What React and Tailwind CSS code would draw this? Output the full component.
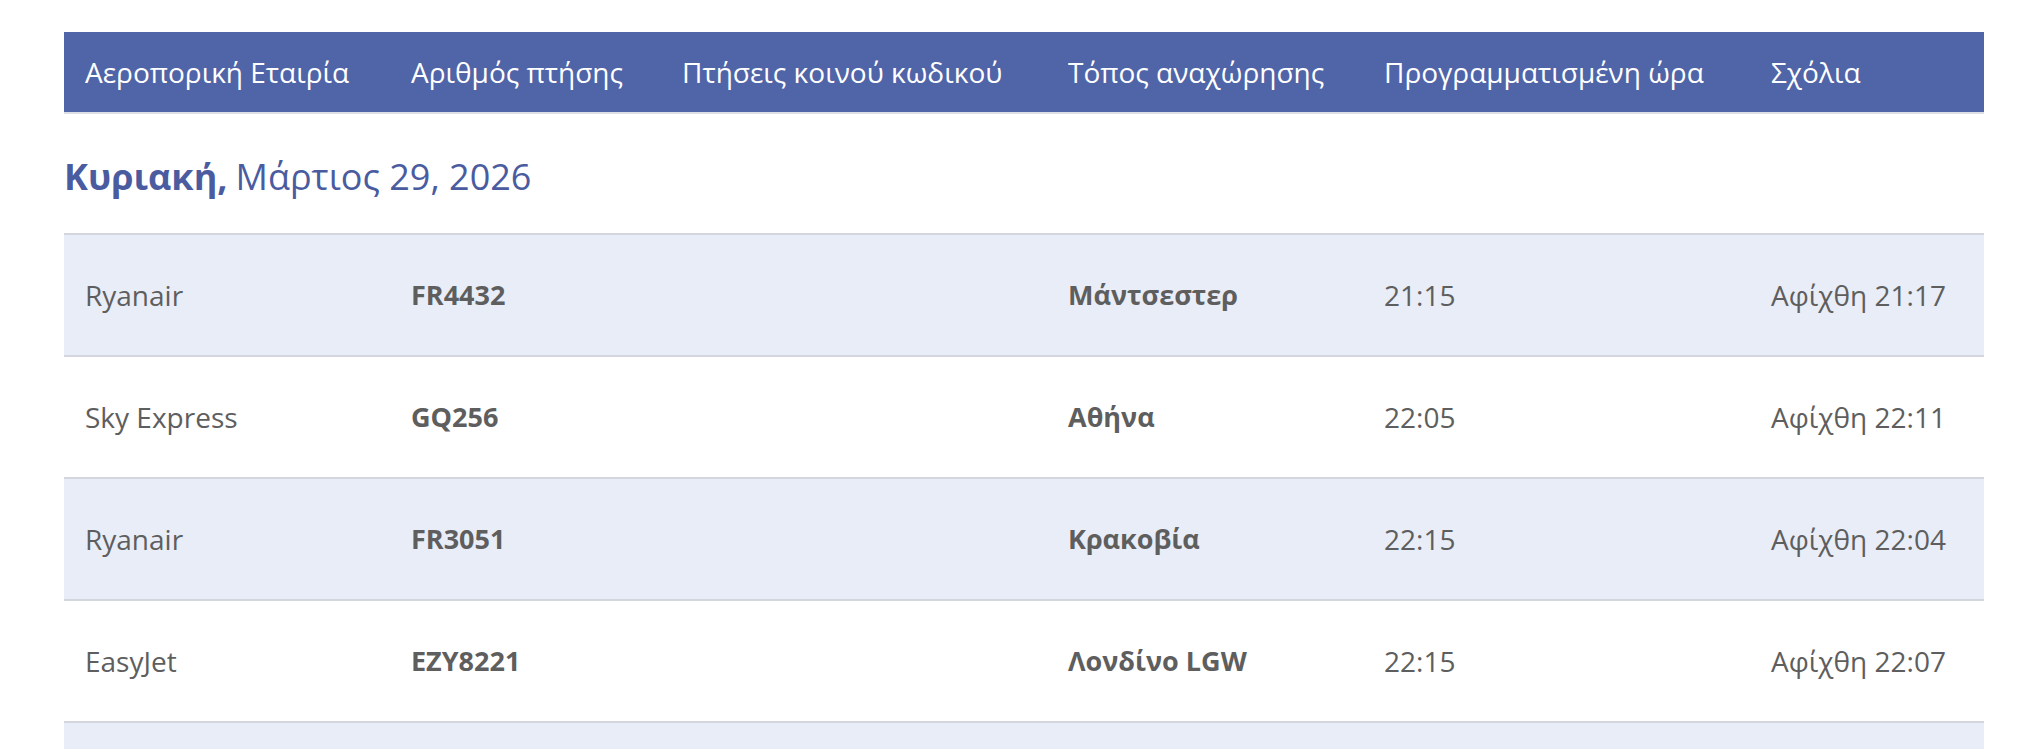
import React from "react";

const columns = [
    "Αεροπορική Εταιρία",
    "Αριθμός πτήσης",
    "Πτήσεις κοινού κωδικού",
    "Τόπος αναχώρησης",
    "Προγραμματισμένη ώρα",
    "Σχόλια",
];

const flights = [
    { airline: "Ryanair", flight: "FR4432", codeshare: "", from: "Μάντσεστερ", time: "21:15", note: "Αφίχθη 21:17" },
    { airline: "Sky Express", flight: "GQ256", codeshare: "", from: "Αθήνα", time: "22:05", note: "Αφίχθη 22:11" },
    { airline: "Ryanair", flight: "FR3051", codeshare: "", from: "Κρακοβία", time: "22:15", note: "Αφίχθη 22:04" },
    { airline: "EasyJet", flight: "EZY8221", codeshare: "", from: "Λονδίνο LGW", time: "22:15", note: "Αφίχθη 22:07" },
    { airline: "", flight: "", codeshare: "", from: "", time: "", note: "" },
];

const grid = "grid grid-cols-[326px_271px_386px_316px_387px_1fr] pl-[21px] items-center";

const App = () => {
    return (
        <div className="min-h-screen bg-white pt-[32px] pl-[64px] font-['Open_Sans',sans-serif]">
            <div className="w-[1920px]">
                {/* Table head */}
                <div className={`${grid} h-[82px] bg-[#5064a8] text-white text-[28px] border-b-2 border-[#dcdfe6]`}>
                    {columns.map((c) => (
                        <div key={c}>{c}</div>
                    ))}
                </div>

                {/* Day heading */}
                <div className="h-[119px] pt-[6px] flex items-center text-[36px] text-[#4a5c9f]">
                    <span className="font-bold">Κυριακή,</span>
                    <span className="ml-2">Μάρτιος 29, 2026</span>
                </div>

                {/* Rows */}
                {flights.map((f, i) => (
                    <div
                        key={i}
                        className={`${grid} h-[122px] border-t-2 border-[#d3d6dc] text-[28px] text-[#5e5e5e] ${i % 2 === 0 ? "bg-[#e9edf7]" : "bg-white"}`}
                    >
                        <div>{f.airline}</div>
                        <div className="font-bold text-[27px]">{f.flight}</div>
                        <div>{f.codeshare}</div>
                        <div className="font-bold text-[27px]">{f.from}</div>
                        <div>{f.time}</div>
                        <div>{f.note}</div>
                    </div>
                ))}
            </div>
        </div>
    );
};

export default App;
